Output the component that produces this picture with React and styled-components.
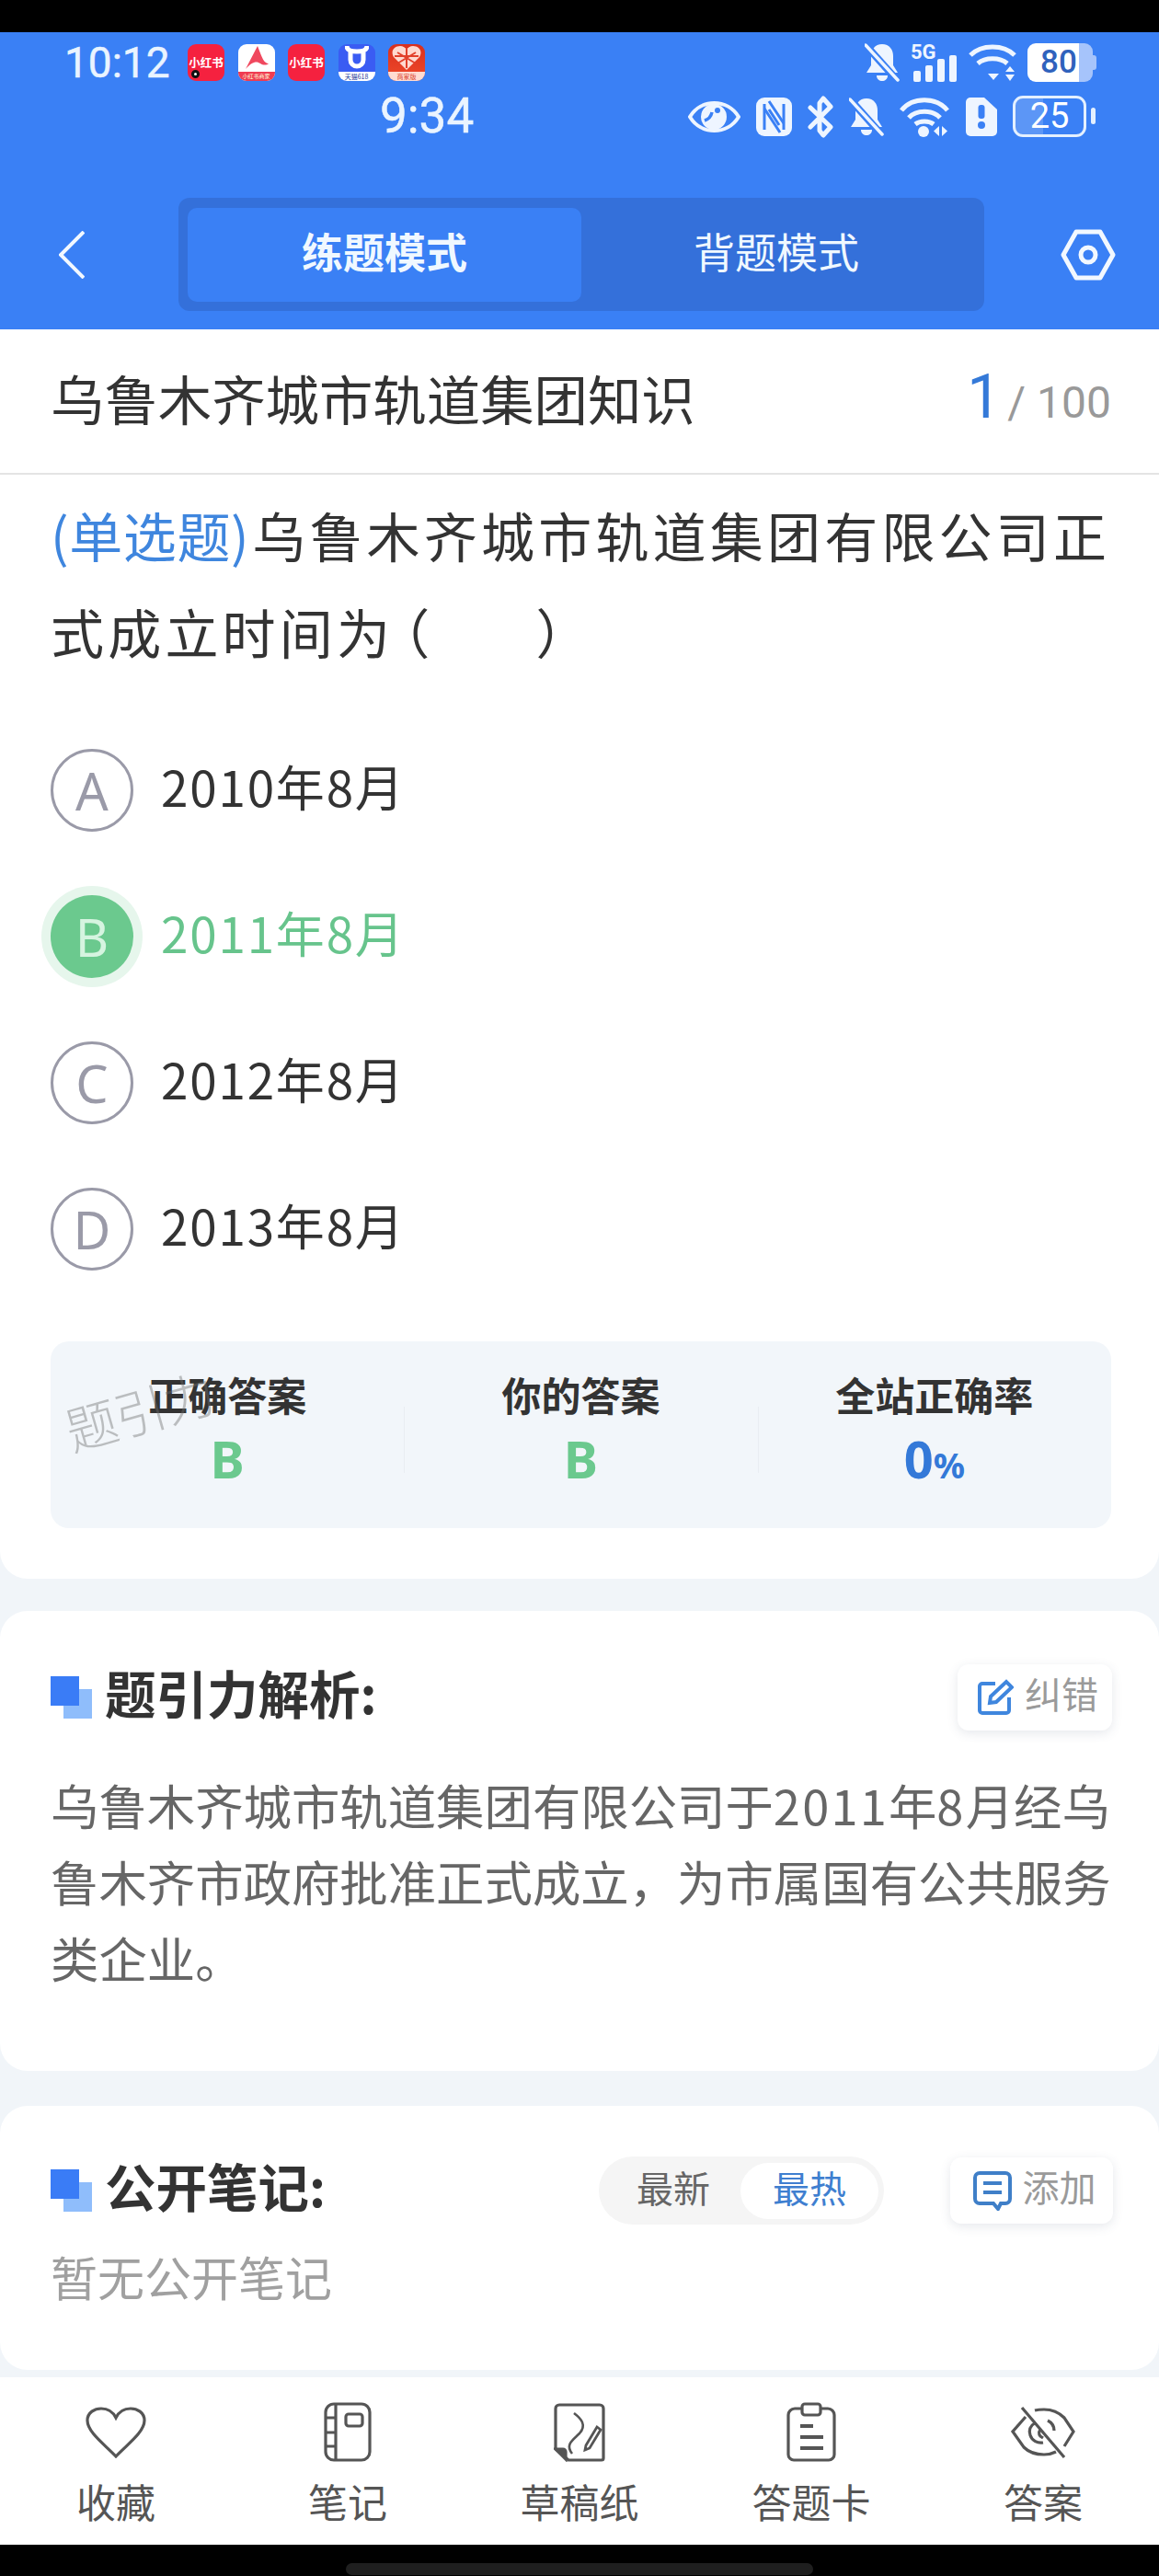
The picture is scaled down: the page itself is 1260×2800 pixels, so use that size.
import React from "react";
import styled, { createGlobalStyle } from "styled-components";

const SANS = `"Noto Sans CJK SC", "Noto Sans", sans-serif`;
const BLUE = "#3a80f5";
const GREEN = "#6bc98e";

const Global = createGlobalStyle`
  html, body { margin: 0; padding: 0; background: #000; }
  body { font-family: ${SANS}; width: 1260px; }
  * { box-sizing: border-box; }
`;

const Page = styled.div`
  width: 1260px;
  height: 2800px;
  display: flex;
  flex-direction: column;
  background: #f1f5f9;
  overflow: hidden;
`;
const Bezel = styled.div`
  height: 35px;
  background: #000;
  flex: none;
`;
const Header = styled.header`
  height: 323px;
  flex: none;
  background: ${BLUE};
  color: #fff;
  display: flex;
  flex-direction: column;
`;
const StatusRow = styled.div`
  display: flex;
  align-items: center;
  height: ${(p) => p.$h}px;
  margin-top: ${(p) => p.$top}px;
  padding: 0 69px 0 ${(p) => p.$left}px;
`;
const Clock = styled.span`
  font-family: Roboto, sans-serif;
  font-size: ${(p) => p.$size}px;
  line-height: 1;
  color: #eaf4ff;
  width: ${(p) => p.$w}px;
  flex: none;
  -webkit-text-stroke: 0.5px #eaf4ff;
`;
const AppIcons = styled.div`
  display: flex;
  gap: 14.5px;
  margin-left: 20px;
`;
const AppIcon = styled.div`
  position: relative;
  width: 40px;
  height: 40px;
  border-radius: 9px;
  overflow: hidden;
  flex: none;
  display: flex;
  align-items: center;
  justify-content: center;
  background: ${(p) => p.$bg};
`;
const AppName = styled.span`
  font-size: 12.5px;
  line-height: 1;
  font-weight: 700;
  color: #fff;
  white-space: nowrap;
`;
const Dot = styled.i`
  position: absolute;
  left: 4px;
  bottom: 3px;
  width: 9px;
  height: 9px;
  border-radius: 50%;
  background: #fff;
  border: 3px solid #111;
`;
const Band = styled.span`
  position: absolute;
  left: 0;
  right: 0;
  bottom: 0;
  height: 10px;
  font-size: ${(p) => p.$size || 7}px;
  line-height: 10px;
  text-align: center;
  background: ${(p) => p.$bg};
  color: ${(p) => p.$fg};
  white-space: nowrap;
`;
const StatusIcons = styled.div`
  margin-left: auto;
  display: flex;
  align-items: center;
  gap: ${(p) => p.$gap}px;
`;
const Battery80 = styled.div`
  position: relative;
  width: 71px;
  height: 42px;
  border-radius: 9px;
  background: linear-gradient(90deg, #fff 0 79%, #a6c4fb 79% 100%);
  color: #2f62bd;
  font-size: 35px;
  font-family: Roboto, sans-serif;
  font-weight: 500;
  line-height: 42px;
  padding-left: 14px;
  margin-right: 3px;
  &::after {
    content: "";
    position: absolute;
    right: -4px;
    top: 13px;
    width: 4px;
    height: 16px;
    border-radius: 0 3px 3px 0;
    background: #a6c4fb;
  }
`;
const Battery25 = styled.div`
  position: relative;
  width: 80px;
  height: 45px;
  border-radius: 11px;
  border: 3px solid #e4f0ff;
  background: linear-gradient(90deg, #5c96f6 0 40%, transparent 40%);
  color: #fff;
  font-size: 38px;
  font-family: Roboto, sans-serif;
  line-height: 39px;
  text-align: center;
  margin-right: 10px;
  &::after {
    content: "";
    position: absolute;
    right: -13px;
    top: 10px;
    width: 5px;
    height: 18px;
    border-radius: 3px;
    background: #e4f0ff;
  }
`;
const NavRow = styled.div`
  display: flex;
  align-items: center;
  margin-top: 66px;
  padding-left: 64px;
`;
const Track = styled.div`
  width: 876px;
  height: 123px;
  margin: 0 83px 0 102px;
  padding: 11px 10px 10px;
  border-radius: 12px;
  background: #3470da;
  display: flex;
  flex: none;
`;
const Tab = styled.div`
  width: ${(p) => (p.$active ? "428px" : "auto")};
  flex: ${(p) => (p.$active ? "none" : "1")};
  border-radius: 10px;
  background: ${(p) => (p.$active ? BLUE : "transparent")};
  font-size: 45px;
  font-weight: ${(p) => (p.$active ? 700 : 400)};
  color: #f0f8ff;
  display: flex;
  align-items: center;
  justify-content: center;
  padding: 0 ${(p) => (p.$active ? "0" : "4px")} 10px 0;
`;
const TitleBar = styled.div`
  height: 158px;
  flex: none;
  background: #fff;
  border-bottom: 2px solid #e4e4e4;
  display: flex;
  align-items: center;
  justify-content: space-between;
  padding: 0 52px 0 55px;
`;
const TitleText = styled.h1`
  margin: 0;
  font-size: 58.4px;
  font-weight: 400;
  color: #333;
  padding-bottom: 10px;
`;
const Progress = styled.div`
  display: flex;
  align-items: baseline;
  color: #999;
  font-size: 48px;
  font-family: Roboto, sans-serif;
  padding-bottom: 9px;
`;
const ProgressNow = styled.span`
  font-size: 66px;
  color: #3479d8;
  margin-right: 7px;
`;
const Card = styled.section`
  flex: none;
  background: #fff;
  border-radius: 30px;
  padding: ${(p) => p.$pad};
  margin-top: ${(p) => p.$top || 0}px;
`;
const QuestionCard = styled(Card)`
  border-radius: 0 0 30px 30px;
`;
const Question = styled.p`
  margin: 0 -12px 0 0;
  font-size: 58px;
  line-height: 105px;
  letter-spacing: 4.2px;
  color: #333;
`;
const QType = styled.span`
  color: #3f86de;
  letter-spacing: 0.6px;
  margin-right: 3px;
`;
const OpenParen = styled.span`
  margin-left: -19px;
`;
const Blank = styled.span`
  display: inline-block;
  width: 111px;
`;
const Options = styled.div`
  margin-top: 40px;
  display: flex;
  flex-direction: column;
`;
const Option = styled.div`
  height: 159px;
  display: flex;
  align-items: center;
  gap: 30px;
  font-size: 53px;
  color: ${(p) => (p.$ok ? "#67c48c" : "#333")};
`;
const OptionText = styled.span`
  padding-bottom: 10px;
  letter-spacing: 1.8px;
`;
const Badge = styled.div`
  width: 90px;
  height: 90px;
  border-radius: 50%;
  flex: none;
  display: flex;
  align-items: center;
  justify-content: center;
  font-size: 56px;
  font-family: "Noto Sans", sans-serif;
  border: ${(p) => (p.$ok ? "none" : "3px solid #9a9aa8")};
  color: ${(p) => (p.$ok ? "#d6f4e0" : "#9a9aa8")};
  background: ${(p) => (p.$ok ? GREEN : "#fff")};
  box-shadow: ${(p) => (p.$ok ? "0 0 0 10px #e6f6ec" : "none")};
`;
const Stats = styled.div`
  position: relative;
  margin-top: 43px;
  height: 203px;
  border-radius: 20px;
  background: #f2f6fa;
  display: grid;
  grid-template-columns: repeat(3, 1fr);
  padding-top: 26px;
`;
const Stat = styled.div`
  display: flex;
  flex-direction: column;
  align-items: center;
  position: relative;
  height: 133px;
  & + &::before {
    content: "";
    position: absolute;
    left: 0;
    top: 45px;
    height: 72px;
    width: 1px;
    background: #e9edf2;
  }
`;
const StatLabel = styled.div`
  font-size: 43px;
  line-height: 62px;
  font-weight: 700;
  color: #333;
`;
const StatValue = styled.div`
  font-size: 56px;
  line-height: 78px;
  font-weight: 700;
  font-family: "Noto Sans", sans-serif;
  color: ${(p) => p.$color};
`;
const Percent = styled.span`
  font-size: 38px;
`;
const Watermark = styled.div`
  position: absolute;
  left: 14px;
  top: 44px;
  font-size: 56px;
  line-height: 60px;
  font-weight: 300;
  letter-spacing: -1px;
  color: rgba(110, 110, 110, 0.42);
  transform: rotate(-16deg);
  white-space: nowrap;
`;
const SectionHead = styled.div`
  height: ${(p) => p.$h}px;
  display: flex;
  align-items: center;
`;
const Mark = styled.div`
  position: relative;
  width: 45px;
  height: 46px;
  flex: none;
  margin-right: 14px;
  &::before, &::after {
    content: "";
    position: absolute;
    width: 31px;
    height: 32px;
  }
  &::before { right: 0; bottom: 0; background: #8fbdfb; }
  &::after { left: 0; top: 0; background: #3a7cf6; }
`;
const SectionTitle = styled.h2`
  margin: 0;
  font-size: 55.5px;
  font-weight: 700;
  color: #333;
  white-space: nowrap;
  padding-bottom: 12px;
`;
const ActionButton = styled.div`
  margin-left: ${(p) => p.$left || "auto"};
  width: ${(p) => p.$w}px;
  height: 72px;
  flex: none;
  border-radius: 12px;
  background: #fff;
  box-shadow: 0 3px 12px rgba(60, 80, 110, 0.13);
  display: flex;
  align-items: center;
  justify-content: center;
  gap: 12px;
  font-size: 40px;
  color: #9a9a9a;
  padding-left: 6px;
`;
const ActionLabel = styled.span`
  padding-bottom: 10px;
`;
const Body = styled.p`
  margin: 39px 0 0;
  font-size: 52.4px;
  line-height: 83px;
  color: #666;
`;
const Digits = styled.span`
  letter-spacing: 2.2px;
`;
const Segment = styled.div`
  margin-left: auto;
  width: 310px;
  height: 74px;
  border-radius: 37px;
  background: #f5f5f5;
  display: flex;
  align-items: center;
  padding: 0 6px 0 8px;
`;
const SegItem = styled.div`
  height: ${(p) => (p.$active ? "61px" : "auto")};
  flex: ${(p) => (p.$active ? "none" : "1")};
  width: ${(p) => (p.$active ? "150px" : "auto")};
  border-radius: 31px;
  display: flex;
  align-items: center;
  justify-content: center;
  font-size: 40px;
  padding-bottom: 9px;
  color: ${(p) => (p.$active ? "#3f7fd0" : "#666")};
  background: ${(p) => (p.$active ? "#fff" : "transparent")};
`;
const Empty = styled.p`
  margin: 21px 0 0;
  font-size: 51px;
  line-height: 70px;
  color: #a0a0a0;
`;
const BottomBar = styled.nav`
  margin-top: 8px;
  height: 182px;
  flex: none;
  background: #fff;
  display: grid;
  grid-template-columns: repeat(5, 252px);
`;
const NavItem = styled.div`
  display: flex;
  flex-direction: column;
  align-items: center;
  font-size: 43px;
  color: #555;
`;
const NavIconBox = styled.div`
  height: 65px;
  margin-top: 27px;
  display: flex;
  align-items: center;
  justify-content: center;
`;
const NavLabel = styled.span`
  margin-top: 12px;
  line-height: 60px;
`;
const HomeArea = styled.div`
  height: 35px;
  flex: none;
  background: #000;
  padding: 20px 0 0 376px;
`;
const HomeBar = styled.div`
  width: 508px;
  height: 13px;
  border-radius: 7px;
  background: #1f1f1f;
`;

const W = "#eef5ff";

const BellOff = ({ w = 38, h = 42 }) => (
  <svg width={w} height={h} viewBox="0 0 38 42">
    <path d="M19 1c8 0 12 6 12 13v10l5 8H2l5-8V14C7 7 11 1 19 1z" fill={W} />
    <path d="M13 35h12c0 4-3 6-6 6s-6-2-6-6z" fill={W} />
    <path d="M2 3l33 37" stroke={BLUE} strokeWidth="8" />
    <path d="M1 2l35 38" stroke={W} strokeWidth="3.5" strokeLinecap="round" />
  </svg>
);
const Signal5G = () => (
  <svg width="51" height="42" viewBox="0 0 51 42" overflow="visible">
    <text x="0" y="17" fontSize="22" fontWeight="700" fill={W} fontFamily="Roboto, sans-serif">5G</text>
    <rect x="3" y="30" width="8" height="12" rx="2" fill={W} />
    <rect x="16" y="24" width="8" height="18" rx="2" fill={W} />
    <rect x="29" y="17" width="8" height="25" rx="2" fill={W} />
    <rect x="42" y="13" width="8" height="29" rx="2" fill={W} />
  </svg>
);
const WifiUpDown = () => (
  <svg width="52" height="42" viewBox="0 0 52 42" fill="none">
    <path d="M2 13C14 1 38 1 50 13" stroke={W} strokeWidth="5" />
    <path d="M10 22c8-7 24-7 32 0" stroke={W} strokeWidth="5" />
    <path d="M21 33h12l-6 7z" fill={W} />
    <path d="M45 25l5 6H40zM45 41l5-7H40z" fill={W} />
  </svg>
);
const Eye = () => (
  <svg width="57" height="40" viewBox="0 0 57 40" fill="none">
    <path d="M2 20C14 0 43 0 55 20 43 40 14 40 2 20z" stroke={W} strokeWidth="4" />
    <circle cx="28" cy="20" r="14" fill={W} />
    <path d="M18 24c3-1 7-4 8-9" stroke={BLUE} strokeWidth="3.5" />
    <circle cx="32" cy="13" r="3" fill={BLUE} />
  </svg>
);
const Nfc = () => (
  <svg width="39" height="42" viewBox="0 0 39 42" fill="none">
    <rect x="0" y="0" width="39" height="42" rx="9" fill={W} />
    <path d="M9 7v28M30 7v28" stroke={BLUE} strokeWidth="3" />
    <path d="M14 4l16 24M9 12l17 26M14 13l11 17" stroke={BLUE} strokeWidth="3" />
  </svg>
);
const Bt = () => (
  <svg width="28" height="46" viewBox="0 0 28 46" fill="none">
    <path d="M3 13l22 21-8 9-4-5V8l4-5 8 9L3 34" stroke={W} strokeWidth="5" strokeLinejoin="round" strokeLinecap="round" />
  </svg>
);
const WifiSwap = () => (
  <svg width="55" height="44" viewBox="0 0 55 44" fill="none">
    <path d="M2 15C14 0 40 0 52 15" stroke={W} strokeWidth="5" />
    <path d="M10 23c8-9 26-9 34 0" stroke={W} strokeWidth="5" />
    <path d="M17 30c5-4 15-4 20 0" stroke={W} strokeWidth="5" />
    <circle cx="26" cy="38" r="6" fill={W} />
    <path d="M43 32v11l-6-5.5zM46 32v11l6-5.5z" fill={W} />
  </svg>
);
const Sim = () => (
  <svg width="34" height="42" viewBox="0 0 34 42">
    <path d="M5 0h15l14 13v24a5 5 0 0 1-5 5H5a5 5 0 0 1-5-5V5a5 5 0 0 1 5-5z" fill={W} />
    <rect x="13.5" y="8" width="7" height="15" rx="3" fill={BLUE} />
    <circle cx="17" cy="30" r="4" fill={BLUE} />
  </svg>
);
const Hex = () => (
  <svg width="60" height="56" viewBox="0 0 60 56" fill="none" stroke="#f2f8ff" strokeWidth="5" strokeLinejoin="round">
    <path d="M17 3h26l14 25-14 25H17L3 28z" />
    <circle cx="30" cy="28" r="8" />
  </svg>
);
const Back = () => (
  <svg width="28" height="52" viewBox="0 0 28 52" fill="none" stroke="#f2f8ff" strokeWidth="4">
    <path d="M27 1L2 26l25 25" />
  </svg>
);

const NS = { fill: "none", stroke: "#555", strokeWidth: 3.2 };
const Heart = () => (
  <svg width="66" height="56" viewBox="0 0 66 56" {...NS}>
    <path d="M33 54C22 42 2 28 2 15 2 6 10 2 17 2c7 0 13 4 16 10C36 6 42 2 49 2c7 0 15 4 15 13 0 13-20 27-31 39z" />
  </svg>
);
const Notebook = () => (
  <svg width="52" height="65" viewBox="0 0 52 65" {...NS}>
    <rect x="2" y="2" width="48" height="61" rx="9" />
    <path d="M13 2v61M2 17h11M2 33h11M2 48h11" />
    <rect x="24" y="13" width="18" height="13" rx="3" />
  </svg>
);
const Sketch = () => (
  <svg width="56" height="64" viewBox="0 0 56 64" {...NS}>
    <path d="M6 2h44a4 4 0 0 1 4 4v54a2 2 0 0 1-2 2H16L2 50V6a4 4 0 0 1 4-4z" />
    <path d="M2 50h8a3 3 0 0 1 3 3v8z" fill="#555" />
    <path d="M22 11c8 6 14 13 6 22-7 7-16 12-8 22" strokeWidth="2.6" />
    <path d="M35 46l12-20 4 3-12 20-5 2z" fill="#fff" strokeWidth="2.8" />
  </svg>
);
const Clip = () => (
  <svg width="54" height="65" viewBox="0 0 54 65" {...NS}>
    <path d="M17 7H9a7 7 0 0 0-7 7v43a6 6 0 0 0 6 6h38a6 6 0 0 0 6-6V14a7 7 0 0 0-7-7h-8" />
    <rect x="17" y="2" width="20" height="12" rx="3" />
    <path d="M15 26h14M15 38h25M15 50h25" strokeWidth="4" />
  </svg>
);
const EyeOff = () => (
  <svg width="70" height="58" viewBox="0 0 70 58" {...NS}>
    <path d="M12 2l46 54" />
    <path d="M16 12L2 28l12 17c5 5 13 8 22 8 5 0 9-1 13-3" />
    <path d="M26 5c4-1 7-1 10-1 9 0 16 3 22 9l10 15-10 16" />
    <path d="M27 18c-5 3-8 8-6 14 2 6 8 9 14 8" />
    <path d="M33 26c-3 1-3 5-1 7l3 2" />
    <path d="M40 16c4 2 7 6 7 11" />
  </svg>
);
const Edit = () => (
  <svg width="40" height="40" viewBox="0 0 40 40" fill="none" stroke="#3f86de" strokeWidth="4">
    <path d="M20 5H6a3 3 0 0 0-3 3v26a3 3 0 0 0 3 3h26a3 3 0 0 0 3-3V20" />
    <path d="M14 26l1-7L32 3l6 6-17 16z" />
  </svg>
);
const Comment = () => (
  <svg width="42" height="44" viewBox="0 0 42 44" fill="none" stroke="#3f7fc8" strokeWidth="4">
    <path d="M7 3h28a5 5 0 0 1 5 5v23a5 5 0 0 1-5 5h-5l-3 6-5-6H7a5 5 0 0 1-5-5V8a5 5 0 0 1 5-5z" />
    <path d="M11 14h20M11 24h20" />
  </svg>
);

const options = [
  { k: "A", t: "2010年8月" },
  { k: "B", t: "2011年8月", ok: true },
  { k: "C", t: "2012年8月" },
  { k: "D", t: "2013年8月" },
];
const navs = [
  { t: "收藏", I: Heart },
  { t: "笔记", I: Notebook },
  { t: "草稿纸", I: Sketch },
  { t: "答题卡", I: Clip },
  { t: "答案", I: EyeOff },
];

export default function App() {
  return (
    <Page>
      <Global />
      <Bezel />
      <Header>
        <StatusRow $h={42} $top={12} $left={70}>
          <Clock $size={46} $w={114}>10:12</Clock>
          <AppIcons>
            <AppIcon $bg="#f5213f"><AppName>小红书</AppName><Dot /></AppIcon>
            <AppIcon $bg="#fff">
              <svg width="30" height="30" viewBox="0 0 30 30" style={{ marginBottom: 8 }}>
                <path d="M16 1L3 26c7-8 12-9 16-6 3 2 7 2 9 0-5 0-7-6-12-19z" fill="#f0485e" />
              </svg>
              <Band $bg="#ef3c52" $fg="#ffd" $size={6}>小红书商家</Band>
            </AppIcon>
            <AppIcon $bg="#f5213f"><AppName>小红书</AppName></AppIcon>
            <AppIcon $bg="#3a5cf3">
              <svg width="26" height="28" viewBox="0 0 26 28" style={{ marginBottom: 10 }} fill="none" stroke="#fff" strokeWidth="5">
                <path d="M2 1c0 4 3 6 11 6s11-2 11-6" />
                <path d="M6 8v8a7 7 0 0 0 14 0V8" />
              </svg>
              <Band $bg="#fff" $fg="#1e3a9a">天猫618</Band>
            </AppIcon>
            <AppIcon $bg="linear-gradient(#d9301e,#ef4a2a)">
              <svg width="32" height="28" viewBox="0 0 32 28" style={{ marginBottom: 10 }}>
                <path d="M16 27L2 13C-2 6 3 1 9 1c3 0 6 2 7 4 1-2 4-4 7-4 6 0 11 5 7 12z" fill="#ffd9cf" />
                <path d="M6 8l20 12M26 8L6 20M16 3v22M3 12h26" stroke="#e2402a" strokeWidth="2" />
              </svg>
              <Band $bg="#ffdcd2" $fg="#d9402a">商家版</Band>
            </AppIcon>
          </AppIcons>
          <StatusIcons $gap={12}>
            <BellOff />
            <Signal5G />
            <WifiUpDown />
            <Battery80>80</Battery80>
          </StatusIcons>
        </StatusRow>
        <StatusRow $h={45} $top={15} $left={413}>
          <Clock $size={53} $w={102}>9:34</Clock>
          <StatusIcons $gap={17}>
            <Eye />
            <Nfc />
            <Bt />
            <BellOff />
            <WifiSwap />
            <Sim />
            <Battery25>25</Battery25>
          </StatusIcons>
        </StatusRow>
        <NavRow>
          <Back />
          <Track>
            <Tab $active>练题模式</Tab>
            <Tab>背题模式</Tab>
          </Track>
          <Hex />
        </NavRow>
      </Header>
      <TitleBar>
        <TitleText>乌鲁木齐城市轨道集团知识</TitleText>
        <Progress><ProgressNow>1</ProgressNow>/ 100</Progress>
      </TitleBar>
      <QuestionCard $pad="13px 52px 55px 55px">
        <Question><QType>(单选题)</QType>乌鲁木齐城市轨道集团有限公司正式成立时间为<OpenParen>（</OpenParen><Blank />）</Question>
        <Options>
          {options.map((o) => (
            <Option key={o.k} $ok={o.ok}>
              <Badge $ok={o.ok}>{o.k}</Badge>
              <OptionText>{o.t}</OptionText>
            </Option>
          ))}
        </Options>
        <Stats>
          <Stat><StatLabel>正确答案</StatLabel><StatValue $color={GREEN}>B</StatValue></Stat>
          <Stat><StatLabel>你的答案</StatLabel><StatValue $color={GREEN}>B</StatValue></Stat>
          <Stat><StatLabel>全站正确率</StatLabel><StatValue $color="#3479d8">0<Percent>%</Percent></StatValue></Stat>
          <Watermark>题引力</Watermark>
        </Stats>
      </QuestionCard>
      <Card $top={35} $pad="57px 51px 82px 55px">
        <SectionHead $h={73}>
          <Mark />
          <SectionTitle>题引力解析:</SectionTitle>
          <ActionButton $w={168}><Edit /><ActionLabel>纠错</ActionLabel></ActionButton>
        </SectionHead>
        <Body>乌鲁木齐城市轨道集团有限公司于<Digits>2011</Digits>年<Digits>8</Digits>月经乌鲁木齐市政府批准正式成立，为市属国有公共服务类企业。</Body>
      </Card>
      <Card $top={38} $pad="55px 50px 67px 55px">
        <SectionHead $h={74}>
          <Mark />
          <SectionTitle>公开笔记:</SectionTitle>
          <Segment>
            <SegItem>最新</SegItem>
            <SegItem $active>最热</SegItem>
          </Segment>
          <ActionButton $w={177} $left="72px"><Comment /><ActionLabel>添加</ActionLabel></ActionButton>
        </SectionHead>
        <Empty>暂无公开笔记</Empty>
      </Card>
      <BottomBar>
        {navs.map(({ t, I }) => (
          <NavItem key={t}>
            <NavIconBox><I /></NavIconBox>
            <NavLabel>{t}</NavLabel>
          </NavItem>
        ))}
      </BottomBar>
      <HomeArea><HomeBar /></HomeArea>
    </Page>
  );
}
